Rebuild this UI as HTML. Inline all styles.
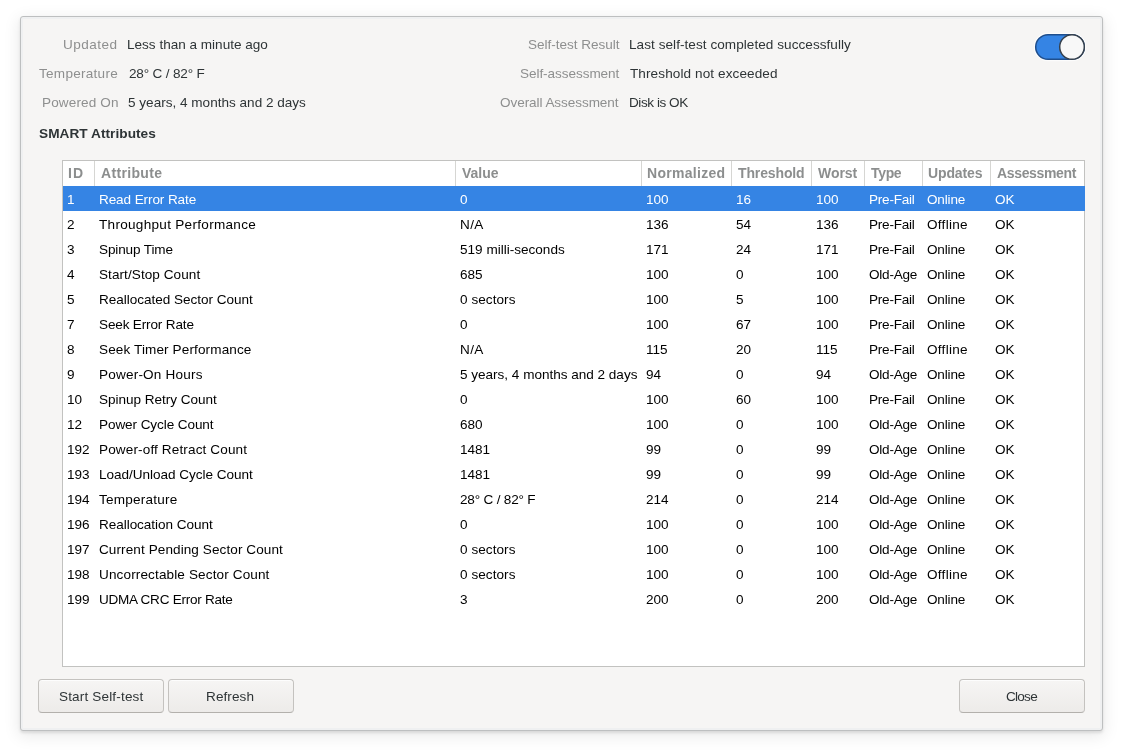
<!DOCTYPE html>
<html><head><meta charset="utf-8"><style>
html,body{margin:0;padding:0;}
body{width:1123px;height:755px;background:#ffffff;position:relative;overflow:hidden;font-family:"Liberation Sans",sans-serif;}
.t{position:absolute;white-space:pre;will-change:transform;line-height:18px;}
.dlg{position:absolute;left:20px;top:16px;width:1081px;height:713px;background:#f6f5f4;border:1px solid #bdbfc0;border-radius:3px;box-shadow:0 2px 3px rgba(0,0,0,0.10), 0 4px 16px 2px rgba(0,0,0,0.08), inset 0 0 0 2px #eff0f1;}
.lbl{color:#8e8f8f;}
.val{color:#2e3436;}
.hdr{color:#8c8e8e;font-weight:bold;}
.cell{color:#000;}
.sel{color:#fff;}
.tbl{position:absolute;left:62px;top:160px;width:1021px;height:505px;background:#fff;border:1px solid #c2c2c0;}
.div{position:absolute;top:161px;height:25px;width:1px;background:#d6d6d3;}
.selrow{position:absolute;left:63px;top:186px;width:1022px;height:25px;background:#3584e4;}
.btn{position:absolute;top:679px;height:32px;border:1px solid #c4c2bf;border-bottom-color:#b3b0ac;border-radius:4px;background:linear-gradient(#f6f5f4,#edebe9);box-shadow:inset 0 1px rgba(255,255,255,0.8);box-sizing:content-box;}
.sw{position:absolute;left:1035px;top:34px;width:48px;height:24px;border:1px solid #1d4f90;border-radius:13px;background:#3584e4;}
.knob{position:absolute;left:1059px;top:34px;width:24px;height:24px;border:1px solid #39414d;border-radius:50%;background:#f9f9f9;}
</style></head><body>
<div class="dlg"></div>

<div id="t1" class="t lbl" style="left:63.30px;top:36.30px;font-size:13.55px;letter-spacing:0.479px;">Updated</div>
<div id="t2" class="t val" style="left:126.80px;top:36.30px;font-size:13.55px;letter-spacing:0.000px;">Less than a minute ago</div>
<div id="t3" class="t lbl" style="left:39.15px;top:65.30px;font-size:13.55px;letter-spacing:0.266px;">Temperature</div>
<div id="t4" class="t val" style="left:128.50px;top:65.30px;font-size:13.55px;letter-spacing:-0.176px;">28° C / 82° F</div>
<div id="t5" class="t lbl" style="left:41.50px;top:94.30px;font-size:13.55px;letter-spacing:0.139px;">Powered On</div>
<div id="t6" class="t val" style="left:127.80px;top:94.30px;font-size:13.55px;letter-spacing:0.006px;">5 years, 4 months and 2 days</div>
<div id="t7" class="t lbl" style="left:527.60px;top:36.30px;font-size:13.55px;letter-spacing:-0.023px;">Self-test Result</div>
<div id="t8" class="t val" style="left:629.40px;top:36.30px;font-size:13.55px;letter-spacing:0.056px;">Last self-test completed successfully</div>
<div id="t9" class="t lbl" style="left:519.80px;top:65.30px;font-size:13.55px;letter-spacing:-0.057px;">Self-assessment</div>
<div id="t10" class="t val" style="left:630.40px;top:65.30px;font-size:13.55px;letter-spacing:0.100px;">Threshold not exceeded</div>
<div id="t11" class="t lbl" style="left:500.40px;top:94.30px;font-size:13.55px;letter-spacing:-0.067px;">Overall Assessment</div>
<div id="t12" class="t val" style="left:629.40px;top:94.30px;font-size:13.55px;letter-spacing:-0.444px;">Disk is OK</div>
<div id="t13" class="t val" style="left:38.50px;top:125.27px;font-size:13.65px;letter-spacing:0.043px;font-weight:bold;">SMART Attributes</div>
<svg style="position:absolute;left:1032px;top:31px" width="56" height="32" viewBox="0 0 56 32"><rect x="2.5" y="2.5" width="51" height="27" rx="13.5" fill="none" stroke="rgba(255,255,255,0.7)" stroke-width="1.5"/><rect x="3.7" y="3.7" width="48.6" height="24.6" rx="12.3" fill="#3584e4" stroke="#1f4e8c" stroke-width="1.5"/><circle cx="40" cy="16" r="12.3" fill="#f8f8f8" stroke="#36404c" stroke-width="1.5"/></svg>
<div class="tbl"></div>
<div class="selrow"></div>
<div class="div" style="left:94px"></div>
<div class="div" style="left:455px"></div>
<div class="div" style="left:641px"></div>
<div class="div" style="left:731px"></div>
<div class="div" style="left:811px"></div>
<div class="div" style="left:864px"></div>
<div class="div" style="left:922px"></div>
<div class="div" style="left:990px"></div>
<div id="t14" class="t hdr" style="left:68.00px;top:163.85px;font-size:14.0px;letter-spacing:1.200px;">ID</div>
<div id="t15" class="t hdr" style="left:100.90px;top:163.85px;font-size:14.0px;letter-spacing:0.331px;">Attribute</div>
<div id="t16" class="t hdr" style="left:461.90px;top:163.85px;font-size:14.0px;letter-spacing:0.010px;">Value</div>
<div id="t17" class="t hdr" style="left:647.40px;top:163.85px;font-size:14.0px;letter-spacing:0.298px;">Normalized</div>
<div id="t18" class="t hdr" style="left:738.40px;top:163.85px;font-size:14.0px;letter-spacing:-0.125px;">Threshold</div>
<div id="t19" class="t hdr" style="left:818.10px;top:163.85px;font-size:14.0px;letter-spacing:-0.060px;">Worst</div>
<div id="t20" class="t hdr" style="left:870.80px;top:163.85px;font-size:14.0px;letter-spacing:-0.333px;">Type</div>
<div id="t21" class="t hdr" style="left:928.30px;top:163.85px;font-size:14.0px;letter-spacing:-0.133px;">Updates</div>
<div id="t22" class="t hdr" style="left:997.40px;top:163.85px;font-size:14.0px;letter-spacing:-0.346px;">Assessment</div>
<div id="t23" class="t sel" style="left:67.30px;top:191.00px;font-size:13.55px;letter-spacing:0.000px;">1</div>
<div id="t24" class="t sel" style="left:99.30px;top:191.00px;font-size:13.55px;letter-spacing:-0.098px;">Read Error Rate</div>
<div id="t25" class="t sel" style="left:460.30px;top:191.00px;font-size:13.55px;letter-spacing:0.000px;">0</div>
<div id="t26" class="t sel" style="left:646.30px;top:191.00px;font-size:13.55px;letter-spacing:0.000px;">100</div>
<div id="t27" class="t sel" style="left:736.30px;top:191.00px;font-size:13.55px;letter-spacing:0.000px;">16</div>
<div id="t28" class="t sel" style="left:816.30px;top:191.00px;font-size:13.55px;letter-spacing:0.000px;">100</div>
<div id="t29" class="t sel" style="left:869.30px;top:191.00px;font-size:13.55px;letter-spacing:-0.230px;">Pre-Fail</div>
<div id="t30" class="t sel" style="left:927.30px;top:191.00px;font-size:13.55px;letter-spacing:-0.168px;">Online</div>
<div id="t31" class="t sel" style="left:995.30px;top:191.00px;font-size:13.55px;letter-spacing:0.000px;">OK</div>
<div id="t32" class="t cell" style="left:67.30px;top:216.00px;font-size:13.55px;letter-spacing:0.000px;">2</div>
<div id="t33" class="t cell" style="left:99.30px;top:216.00px;font-size:13.55px;letter-spacing:0.294px;">Throughput Performance</div>
<div id="t34" class="t cell" style="left:460.30px;top:216.00px;font-size:13.55px;letter-spacing:0.350px;">N/A</div>
<div id="t35" class="t cell" style="left:646.30px;top:216.00px;font-size:13.55px;letter-spacing:0.000px;">136</div>
<div id="t36" class="t cell" style="left:736.30px;top:216.00px;font-size:13.55px;letter-spacing:0.000px;">54</div>
<div id="t37" class="t cell" style="left:816.30px;top:216.00px;font-size:13.55px;letter-spacing:0.000px;">136</div>
<div id="t38" class="t cell" style="left:869.30px;top:216.00px;font-size:13.55px;letter-spacing:-0.230px;">Pre-Fail</div>
<div id="t39" class="t cell" style="left:927.30px;top:216.00px;font-size:13.55px;letter-spacing:0.283px;">Offline</div>
<div id="t40" class="t cell" style="left:995.30px;top:216.00px;font-size:13.55px;letter-spacing:0.000px;">OK</div>
<div id="t41" class="t cell" style="left:67.30px;top:241.00px;font-size:13.55px;letter-spacing:0.000px;">3</div>
<div id="t42" class="t cell" style="left:99.30px;top:241.00px;font-size:13.55px;letter-spacing:-0.132px;">Spinup Time</div>
<div id="t43" class="t cell" style="left:460.30px;top:241.00px;font-size:13.55px;letter-spacing:0.004px;">519 milli-seconds</div>
<div id="t44" class="t cell" style="left:646.30px;top:241.00px;font-size:13.55px;letter-spacing:0.000px;">171</div>
<div id="t45" class="t cell" style="left:736.30px;top:241.00px;font-size:13.55px;letter-spacing:0.000px;">24</div>
<div id="t46" class="t cell" style="left:816.30px;top:241.00px;font-size:13.55px;letter-spacing:0.000px;">171</div>
<div id="t47" class="t cell" style="left:869.30px;top:241.00px;font-size:13.55px;letter-spacing:-0.230px;">Pre-Fail</div>
<div id="t48" class="t cell" style="left:927.30px;top:241.00px;font-size:13.55px;letter-spacing:-0.168px;">Online</div>
<div id="t49" class="t cell" style="left:995.30px;top:241.00px;font-size:13.55px;letter-spacing:0.000px;">OK</div>
<div id="t50" class="t cell" style="left:67.30px;top:266.00px;font-size:13.55px;letter-spacing:0.000px;">4</div>
<div id="t51" class="t cell" style="left:99.30px;top:266.00px;font-size:13.55px;letter-spacing:0.067px;">Start/Stop Count</div>
<div id="t52" class="t cell" style="left:460.30px;top:266.00px;font-size:13.55px;letter-spacing:0.000px;">685</div>
<div id="t53" class="t cell" style="left:646.30px;top:266.00px;font-size:13.55px;letter-spacing:0.000px;">100</div>
<div id="t54" class="t cell" style="left:736.30px;top:266.00px;font-size:13.55px;letter-spacing:0.000px;">0</div>
<div id="t55" class="t cell" style="left:816.30px;top:266.00px;font-size:13.55px;letter-spacing:0.000px;">100</div>
<div id="t56" class="t cell" style="left:869.30px;top:266.00px;font-size:13.55px;letter-spacing:-0.217px;">Old-Age</div>
<div id="t57" class="t cell" style="left:927.30px;top:266.00px;font-size:13.55px;letter-spacing:-0.168px;">Online</div>
<div id="t58" class="t cell" style="left:995.30px;top:266.00px;font-size:13.55px;letter-spacing:0.000px;">OK</div>
<div id="t59" class="t cell" style="left:67.30px;top:291.00px;font-size:13.55px;letter-spacing:0.000px;">5</div>
<div id="t60" class="t cell" style="left:99.30px;top:291.00px;font-size:13.55px;letter-spacing:-0.026px;">Reallocated Sector Count</div>
<div id="t61" class="t cell" style="left:460.30px;top:291.00px;font-size:13.55px;letter-spacing:0.060px;">0 sectors</div>
<div id="t62" class="t cell" style="left:646.30px;top:291.00px;font-size:13.55px;letter-spacing:0.000px;">100</div>
<div id="t63" class="t cell" style="left:736.30px;top:291.00px;font-size:13.55px;letter-spacing:0.000px;">5</div>
<div id="t64" class="t cell" style="left:816.30px;top:291.00px;font-size:13.55px;letter-spacing:0.000px;">100</div>
<div id="t65" class="t cell" style="left:869.30px;top:291.00px;font-size:13.55px;letter-spacing:-0.230px;">Pre-Fail</div>
<div id="t66" class="t cell" style="left:927.30px;top:291.00px;font-size:13.55px;letter-spacing:-0.168px;">Online</div>
<div id="t67" class="t cell" style="left:995.30px;top:291.00px;font-size:13.55px;letter-spacing:0.000px;">OK</div>
<div id="t68" class="t cell" style="left:67.30px;top:316.00px;font-size:13.55px;letter-spacing:0.000px;">7</div>
<div id="t69" class="t cell" style="left:99.30px;top:316.00px;font-size:13.55px;letter-spacing:-0.155px;">Seek Error Rate</div>
<div id="t70" class="t cell" style="left:460.30px;top:316.00px;font-size:13.55px;letter-spacing:0.000px;">0</div>
<div id="t71" class="t cell" style="left:646.30px;top:316.00px;font-size:13.55px;letter-spacing:0.000px;">100</div>
<div id="t72" class="t cell" style="left:736.30px;top:316.00px;font-size:13.55px;letter-spacing:0.000px;">67</div>
<div id="t73" class="t cell" style="left:816.30px;top:316.00px;font-size:13.55px;letter-spacing:0.000px;">100</div>
<div id="t74" class="t cell" style="left:869.30px;top:316.00px;font-size:13.55px;letter-spacing:-0.230px;">Pre-Fail</div>
<div id="t75" class="t cell" style="left:927.30px;top:316.00px;font-size:13.55px;letter-spacing:-0.168px;">Online</div>
<div id="t76" class="t cell" style="left:995.30px;top:316.00px;font-size:13.55px;letter-spacing:0.000px;">OK</div>
<div id="t77" class="t cell" style="left:67.30px;top:341.00px;font-size:13.55px;letter-spacing:0.000px;">8</div>
<div id="t78" class="t cell" style="left:99.30px;top:341.00px;font-size:13.55px;letter-spacing:0.122px;">Seek Timer Performance</div>
<div id="t79" class="t cell" style="left:460.30px;top:341.00px;font-size:13.55px;letter-spacing:0.350px;">N/A</div>
<div id="t80" class="t cell" style="left:646.30px;top:341.00px;font-size:13.55px;letter-spacing:0.000px;">115</div>
<div id="t81" class="t cell" style="left:736.30px;top:341.00px;font-size:13.55px;letter-spacing:0.000px;">20</div>
<div id="t82" class="t cell" style="left:816.30px;top:341.00px;font-size:13.55px;letter-spacing:0.000px;">115</div>
<div id="t83" class="t cell" style="left:869.30px;top:341.00px;font-size:13.55px;letter-spacing:-0.230px;">Pre-Fail</div>
<div id="t84" class="t cell" style="left:927.30px;top:341.00px;font-size:13.55px;letter-spacing:0.283px;">Offline</div>
<div id="t85" class="t cell" style="left:995.30px;top:341.00px;font-size:13.55px;letter-spacing:0.000px;">OK</div>
<div id="t86" class="t cell" style="left:67.30px;top:366.00px;font-size:13.55px;letter-spacing:0.000px;">9</div>
<div id="t87" class="t cell" style="left:99.30px;top:366.00px;font-size:13.55px;letter-spacing:0.196px;">Power-On Hours</div>
<div id="t88" class="t cell" style="left:460.30px;top:366.00px;font-size:13.55px;letter-spacing:-0.011px;">5 years, 4 months and 2 days</div>
<div id="t89" class="t cell" style="left:646.30px;top:366.00px;font-size:13.55px;letter-spacing:0.000px;">94</div>
<div id="t90" class="t cell" style="left:736.30px;top:366.00px;font-size:13.55px;letter-spacing:0.000px;">0</div>
<div id="t91" class="t cell" style="left:816.30px;top:366.00px;font-size:13.55px;letter-spacing:0.000px;">94</div>
<div id="t92" class="t cell" style="left:869.30px;top:366.00px;font-size:13.55px;letter-spacing:-0.217px;">Old-Age</div>
<div id="t93" class="t cell" style="left:927.30px;top:366.00px;font-size:13.55px;letter-spacing:-0.168px;">Online</div>
<div id="t94" class="t cell" style="left:995.30px;top:366.00px;font-size:13.55px;letter-spacing:0.000px;">OK</div>
<div id="t95" class="t cell" style="left:67.30px;top:391.00px;font-size:13.55px;letter-spacing:0.000px;">10</div>
<div id="t96" class="t cell" style="left:99.30px;top:391.00px;font-size:13.55px;letter-spacing:-0.024px;">Spinup Retry Count</div>
<div id="t97" class="t cell" style="left:460.30px;top:391.00px;font-size:13.55px;letter-spacing:0.000px;">0</div>
<div id="t98" class="t cell" style="left:646.30px;top:391.00px;font-size:13.55px;letter-spacing:0.000px;">100</div>
<div id="t99" class="t cell" style="left:736.30px;top:391.00px;font-size:13.55px;letter-spacing:0.000px;">60</div>
<div id="t100" class="t cell" style="left:816.30px;top:391.00px;font-size:13.55px;letter-spacing:0.000px;">100</div>
<div id="t101" class="t cell" style="left:869.30px;top:391.00px;font-size:13.55px;letter-spacing:-0.230px;">Pre-Fail</div>
<div id="t102" class="t cell" style="left:927.30px;top:391.00px;font-size:13.55px;letter-spacing:-0.168px;">Online</div>
<div id="t103" class="t cell" style="left:995.30px;top:391.00px;font-size:13.55px;letter-spacing:0.000px;">OK</div>
<div id="t104" class="t cell" style="left:67.30px;top:416.00px;font-size:13.55px;letter-spacing:0.000px;">12</div>
<div id="t105" class="t cell" style="left:99.30px;top:416.00px;font-size:13.55px;letter-spacing:-0.087px;">Power Cycle Count</div>
<div id="t106" class="t cell" style="left:460.30px;top:416.00px;font-size:13.55px;letter-spacing:0.000px;">680</div>
<div id="t107" class="t cell" style="left:646.30px;top:416.00px;font-size:13.55px;letter-spacing:0.000px;">100</div>
<div id="t108" class="t cell" style="left:736.30px;top:416.00px;font-size:13.55px;letter-spacing:0.000px;">0</div>
<div id="t109" class="t cell" style="left:816.30px;top:416.00px;font-size:13.55px;letter-spacing:0.000px;">100</div>
<div id="t110" class="t cell" style="left:869.30px;top:416.00px;font-size:13.55px;letter-spacing:-0.217px;">Old-Age</div>
<div id="t111" class="t cell" style="left:927.30px;top:416.00px;font-size:13.55px;letter-spacing:-0.168px;">Online</div>
<div id="t112" class="t cell" style="left:995.30px;top:416.00px;font-size:13.55px;letter-spacing:0.000px;">OK</div>
<div id="t113" class="t cell" style="left:67.30px;top:441.00px;font-size:13.55px;letter-spacing:0.000px;">192</div>
<div id="t114" class="t cell" style="left:99.30px;top:441.00px;font-size:13.55px;letter-spacing:0.136px;">Power-off Retract Count</div>
<div id="t115" class="t cell" style="left:460.30px;top:441.00px;font-size:13.55px;letter-spacing:0.000px;">1481</div>
<div id="t116" class="t cell" style="left:646.30px;top:441.00px;font-size:13.55px;letter-spacing:0.000px;">99</div>
<div id="t117" class="t cell" style="left:736.30px;top:441.00px;font-size:13.55px;letter-spacing:0.000px;">0</div>
<div id="t118" class="t cell" style="left:816.30px;top:441.00px;font-size:13.55px;letter-spacing:0.000px;">99</div>
<div id="t119" class="t cell" style="left:869.30px;top:441.00px;font-size:13.55px;letter-spacing:-0.217px;">Old-Age</div>
<div id="t120" class="t cell" style="left:927.30px;top:441.00px;font-size:13.55px;letter-spacing:-0.168px;">Online</div>
<div id="t121" class="t cell" style="left:995.30px;top:441.00px;font-size:13.55px;letter-spacing:0.000px;">OK</div>
<div id="t122" class="t cell" style="left:67.30px;top:466.00px;font-size:13.55px;letter-spacing:0.000px;">193</div>
<div id="t123" class="t cell" style="left:99.30px;top:466.00px;font-size:13.55px;letter-spacing:-0.027px;">Load/Unload Cycle Count</div>
<div id="t124" class="t cell" style="left:460.30px;top:466.00px;font-size:13.55px;letter-spacing:0.000px;">1481</div>
<div id="t125" class="t cell" style="left:646.30px;top:466.00px;font-size:13.55px;letter-spacing:0.000px;">99</div>
<div id="t126" class="t cell" style="left:736.30px;top:466.00px;font-size:13.55px;letter-spacing:0.000px;">0</div>
<div id="t127" class="t cell" style="left:816.30px;top:466.00px;font-size:13.55px;letter-spacing:0.000px;">99</div>
<div id="t128" class="t cell" style="left:869.30px;top:466.00px;font-size:13.55px;letter-spacing:-0.217px;">Old-Age</div>
<div id="t129" class="t cell" style="left:927.30px;top:466.00px;font-size:13.55px;letter-spacing:-0.168px;">Online</div>
<div id="t130" class="t cell" style="left:995.30px;top:466.00px;font-size:13.55px;letter-spacing:0.000px;">OK</div>
<div id="t131" class="t cell" style="left:67.30px;top:491.00px;font-size:13.55px;letter-spacing:0.000px;">194</div>
<div id="t132" class="t cell" style="left:99.30px;top:491.00px;font-size:13.55px;letter-spacing:0.232px;">Temperature</div>
<div id="t133" class="t cell" style="left:460.30px;top:491.00px;font-size:13.55px;letter-spacing:-0.191px;">28° C / 82° F</div>
<div id="t134" class="t cell" style="left:646.30px;top:491.00px;font-size:13.55px;letter-spacing:0.000px;">214</div>
<div id="t135" class="t cell" style="left:736.30px;top:491.00px;font-size:13.55px;letter-spacing:0.000px;">0</div>
<div id="t136" class="t cell" style="left:816.30px;top:491.00px;font-size:13.55px;letter-spacing:0.000px;">214</div>
<div id="t137" class="t cell" style="left:869.30px;top:491.00px;font-size:13.55px;letter-spacing:-0.217px;">Old-Age</div>
<div id="t138" class="t cell" style="left:927.30px;top:491.00px;font-size:13.55px;letter-spacing:-0.168px;">Online</div>
<div id="t139" class="t cell" style="left:995.30px;top:491.00px;font-size:13.55px;letter-spacing:0.000px;">OK</div>
<div id="t140" class="t cell" style="left:67.30px;top:516.00px;font-size:13.55px;letter-spacing:0.000px;">196</div>
<div id="t141" class="t cell" style="left:99.30px;top:516.00px;font-size:13.55px;letter-spacing:-0.047px;">Reallocation Count</div>
<div id="t142" class="t cell" style="left:460.30px;top:516.00px;font-size:13.55px;letter-spacing:0.000px;">0</div>
<div id="t143" class="t cell" style="left:646.30px;top:516.00px;font-size:13.55px;letter-spacing:0.000px;">100</div>
<div id="t144" class="t cell" style="left:736.30px;top:516.00px;font-size:13.55px;letter-spacing:0.000px;">0</div>
<div id="t145" class="t cell" style="left:816.30px;top:516.00px;font-size:13.55px;letter-spacing:0.000px;">100</div>
<div id="t146" class="t cell" style="left:869.30px;top:516.00px;font-size:13.55px;letter-spacing:-0.217px;">Old-Age</div>
<div id="t147" class="t cell" style="left:927.30px;top:516.00px;font-size:13.55px;letter-spacing:-0.168px;">Online</div>
<div id="t148" class="t cell" style="left:995.30px;top:516.00px;font-size:13.55px;letter-spacing:0.000px;">OK</div>
<div id="t149" class="t cell" style="left:67.30px;top:541.00px;font-size:13.55px;letter-spacing:0.000px;">197</div>
<div id="t150" class="t cell" style="left:99.30px;top:541.00px;font-size:13.55px;letter-spacing:0.088px;">Current Pending Sector Count</div>
<div id="t151" class="t cell" style="left:460.30px;top:541.00px;font-size:13.55px;letter-spacing:0.060px;">0 sectors</div>
<div id="t152" class="t cell" style="left:646.30px;top:541.00px;font-size:13.55px;letter-spacing:0.000px;">100</div>
<div id="t153" class="t cell" style="left:736.30px;top:541.00px;font-size:13.55px;letter-spacing:0.000px;">0</div>
<div id="t154" class="t cell" style="left:816.30px;top:541.00px;font-size:13.55px;letter-spacing:0.000px;">100</div>
<div id="t155" class="t cell" style="left:869.30px;top:541.00px;font-size:13.55px;letter-spacing:-0.217px;">Old-Age</div>
<div id="t156" class="t cell" style="left:927.30px;top:541.00px;font-size:13.55px;letter-spacing:-0.168px;">Online</div>
<div id="t157" class="t cell" style="left:995.30px;top:541.00px;font-size:13.55px;letter-spacing:0.000px;">OK</div>
<div id="t158" class="t cell" style="left:67.30px;top:566.00px;font-size:13.55px;letter-spacing:0.000px;">198</div>
<div id="t159" class="t cell" style="left:99.30px;top:566.00px;font-size:13.55px;letter-spacing:0.129px;">Uncorrectable Sector Count</div>
<div id="t160" class="t cell" style="left:460.30px;top:566.00px;font-size:13.55px;letter-spacing:0.060px;">0 sectors</div>
<div id="t161" class="t cell" style="left:646.30px;top:566.00px;font-size:13.55px;letter-spacing:0.000px;">100</div>
<div id="t162" class="t cell" style="left:736.30px;top:566.00px;font-size:13.55px;letter-spacing:0.000px;">0</div>
<div id="t163" class="t cell" style="left:816.30px;top:566.00px;font-size:13.55px;letter-spacing:0.000px;">100</div>
<div id="t164" class="t cell" style="left:869.30px;top:566.00px;font-size:13.55px;letter-spacing:-0.217px;">Old-Age</div>
<div id="t165" class="t cell" style="left:927.30px;top:566.00px;font-size:13.55px;letter-spacing:0.283px;">Offline</div>
<div id="t166" class="t cell" style="left:995.30px;top:566.00px;font-size:13.55px;letter-spacing:0.000px;">OK</div>
<div id="t167" class="t cell" style="left:67.30px;top:591.00px;font-size:13.55px;letter-spacing:0.000px;">199</div>
<div id="t168" class="t cell" style="left:99.30px;top:591.00px;font-size:13.55px;letter-spacing:-0.261px;">UDMA CRC Error Rate</div>
<div id="t169" class="t cell" style="left:460.30px;top:591.00px;font-size:13.55px;letter-spacing:0.000px;">3</div>
<div id="t170" class="t cell" style="left:646.30px;top:591.00px;font-size:13.55px;letter-spacing:0.000px;">200</div>
<div id="t171" class="t cell" style="left:736.30px;top:591.00px;font-size:13.55px;letter-spacing:0.000px;">0</div>
<div id="t172" class="t cell" style="left:816.30px;top:591.00px;font-size:13.55px;letter-spacing:0.000px;">200</div>
<div id="t173" class="t cell" style="left:869.30px;top:591.00px;font-size:13.55px;letter-spacing:-0.217px;">Old-Age</div>
<div id="t174" class="t cell" style="left:927.30px;top:591.00px;font-size:13.55px;letter-spacing:-0.168px;">Online</div>
<div id="t175" class="t cell" style="left:995.30px;top:591.00px;font-size:13.55px;letter-spacing:0.000px;">OK</div>
<div class="btn" style="left:38px;width:124px;"></div>
<div id="t176" class="t val" style="left:58.60px;top:688.30px;font-size:13.55px;letter-spacing:0.158px;">Start Self-test</div>
<div class="btn" style="left:168px;width:124px;"></div>
<div id="t177" class="t val" style="left:206.30px;top:688.30px;font-size:13.55px;letter-spacing:0.094px;">Refresh</div>
<div class="btn" style="left:959px;width:124px;"></div>
<div id="t178" class="t val" style="left:1006.20px;top:688.30px;font-size:13.55px;letter-spacing:-0.740px;">Close</div>
</body></html>
